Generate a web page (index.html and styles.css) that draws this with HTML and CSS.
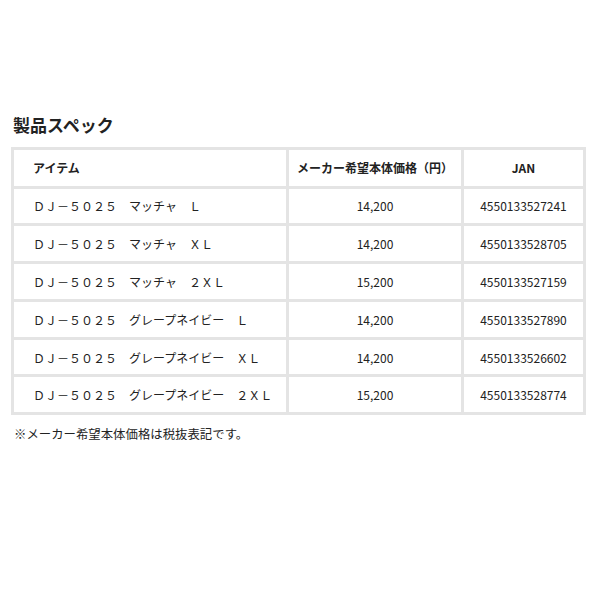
FILE: index.html
```html
<!DOCTYPE html>
<html lang="ja">
<head>
<meta charset="utf-8">
<link rel="stylesheet" href="styles.css">
</head>
<body>
<div class="wrap">
  <h2 class="title">製品スペック</h2>
  <table class="spec">
    <colgroup>
      <col class="c1"><col class="c2"><col class="c3">
    </colgroup>
    <thead>
      <tr><th class="left">アイテム</th><th>メーカー希望本体価格（円）</th><th>JAN</th></tr>
    </thead>
    <tbody>
      <tr><td class="item">ＤＪ－５０２５　マッチャ　Ｌ</td><td>14,200</td><td>4550133527241</td></tr>
      <tr><td class="item">ＤＪ－５０２５　マッチャ　ＸＬ</td><td>14,200</td><td>4550133528705</td></tr>
      <tr><td class="item">ＤＪ－５０２５　マッチャ　２ＸＬ</td><td>15,200</td><td>4550133527159</td></tr>
      <tr><td class="item">ＤＪ－５０２５　グレープネイビー　Ｌ</td><td>14,200</td><td>4550133527890</td></tr>
      <tr><td class="item">ＤＪ－５０２５　グレープネイビー　ＸＬ</td><td>14,200</td><td>4550133526602</td></tr>
      <tr><td class="item">ＤＪ－５０２５　グレープネイビー　２ＸＬ</td><td>15,200</td><td>4550133528774</td></tr>
    </tbody>
  </table>
  <p class="note">※メーカー希望本体価格は税抜表記です。</p>
</div>
</body>
</html>
```
FILE: styles.css
```css
html, body {
  margin: 0;
  padding: 0;
  background: #fff;
}
body {
  font-family: "Noto Sans CJK JP", "Noto Sans", sans-serif;
  color: #222;
}
.wrap {
  padding-top: 113px;
  padding-left: 11px;
  width: 574px;
}
.title {
  margin: 0 0 10px 2px;
  font-size: 17px;
  font-weight: bold;
  line-height: 24px;
  color: #222;
}
.spec {
  width: 572px;
  border-collapse: collapse;
  table-layout: fixed;
  border: 3px solid #e4e4e4;
}
.c1 { width: 275px; }
.c2 { width: 175px; }
.c3 { width: 122px; }
.spec th, .spec td {
  border: 3px solid #e4e4e4;
  font-size: 12px;
  text-align: center;
  padding: 0;
}
.spec th {
  height: 35.5px;
  font-weight: bold;
  border-bottom: 2px solid #12121c;
}
.spec td {
  height: 34.8px;
}
.spec th.left, .spec td.item {
  text-align: left;
  padding-left: 19px;
}
.note {
  margin: 10px 0 0 3px;
  font-size: 12.4px;
  line-height: 18px;
}
```
